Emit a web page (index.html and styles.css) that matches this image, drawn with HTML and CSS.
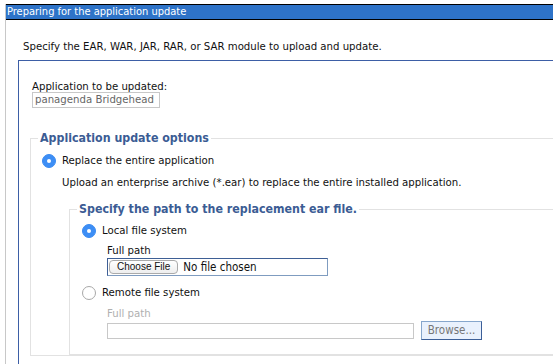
FILE: index.html
```html
<!DOCTYPE html>
<html lang="en">
<head>
    <meta charset="UTF-8">
    <title>Update application</title>
    <link rel="stylesheet" href="styles.css">
</head>
<body>
    <div class="panel">
        <div class="panel-title">Preparing for the application update</div>
        <p class="intro">Specify the EAR, WAR, JAR, RAR, or SAR module to upload and update.</p>
        <div class="content">
            <div class="field-label">Application to be updated:</div>
            <div class="readonly-box">panagenda Bridgehead</div>

            <fieldset class="group">
                <legend>Application update options</legend>
                <div class="radio-row">
                    <span class="radio checked"></span>
                    <span>Replace the entire application</span>
                </div>
                <div class="desc">Upload an enterprise archive (*.ear) to replace the entire installed application.</div>

                <fieldset class="group inner">
                    <legend>Specify the path to the replacement ear file.</legend>
                    <div class="radio-row">
                        <span class="radio checked"></span>
                        <span>Local file system</span>
                    </div>
                    <div class="path">
                        <div class="path-label">Full path</div>
                        <div class="file-box">
                            <span class="choose-btn">Choose File</span>
                            <span>No file chosen</span>
                        </div>
                    </div>

                    <div class="radio-row remote">
                        <span class="radio"></span>
                        <span>Remote file system</span>
                    </div>
                    <div class="path disabled">
                        <div class="path-label">Full path</div>
                        <div class="browse-row">
                            <div class="text-box"></div>
                            <span class="browse-btn">Browse...</span>
                        </div>
                    </div>
                </fieldset>
            </fieldset>
        </div>
    </div>
</body>
</html>
```

FILE: styles.css
```css
html, body {
    margin: 0;
    overflow: hidden;
    background-color: #ffffff;
}
body {
    font-family: "DejaVu Sans Condensed", "DejaVu Sans", sans-serif;
    font-stretch: condensed;
    font-size: 11.3px;
    color: #111111;
    height: 364px;
}
.panel {
    margin: 4px -20px 0 5px;
    border-left: 1px solid #c8c8c8;
    height: 360px;
    overflow: hidden;
}
.panel-title {
    height: 14px;
    line-height: 14px;
    padding-left: 1px;
    background-color: #2e73c8;
    border-top: 1px solid #000000;
    border-bottom: 1px solid #000000;
    color: #ffffff;
    font-size: 11px;
}
.intro {
    margin: 0;
    padding: 21px 0 0 17px;
    line-height: 12px;
    height: 19px;
}
.content {
    margin-left: 12px;
    border-top: 1px solid #3d5ea6;
    border-left: 1px solid #3d5ea6;
    padding: 20px 0 0 13px;
    height: 400px;
}
.field-label {
    line-height: 11px;
    height: 11px;
}
.readonly-box {
    width: 124px;
    height: 14px;
    line-height: 14px;
    padding-left: 2px;
    border: 1px solid #c8c8c8;
    color: #666666;
}
.group {
    margin: 22px 0 0 -2px;
    padding: 7px 0 0 11px;
    border: 1px solid #e2e2e2;
    border-right: none;
    min-width: 0;
}
.group legend {
    margin-left: -4px;
    padding: 0 2px;
    line-height: 16px;
    font-size: 12.3px;
    font-weight: bold;
    color: #3b5c94;
}
.radio-row {
    display: flex;
    align-items: center;
    gap: 6px;
    height: 16px;
    line-height: 16px;
}
.radio {
    width: 14px;
    height: 14px;
    box-sizing: border-box;
    border-radius: 50%;
    border: 1px solid #a8a8a8;
    background-color: #ffffff;
    display: flex;
    align-items: center;
    justify-content: center;
}
.radio.checked {
    border-color: #3a8bf2;
    background-color: #3d8ef5;
}
.radio.checked::after {
    content: "";
    width: 4px;
    height: 4px;
    border-radius: 50%;
    background-color: #ffffff;
}
.desc {
    margin: 6px 0 0 20px;
    line-height: 16px;
}
.inner {
    margin: 10px 0 0 27px;
    padding: 6px 0 14px 12px;
    border-bottom: 1px solid #e2e2e2;
}
.inner legend {
    margin-left: -5px;
}
.path {
    padding-left: 25px;
    margin-top: 5px;
}
.path-label {
    line-height: 14px;
}
.file-box {
    display: flex;
    align-items: center;
    gap: 5px;
    width: 219px;
    height: 16px;
    border: 1px solid #3e5f95;
    border-right-color: #7f9cc0;
    border-bottom-color: #7f9cc0;
    font-size: 11.5px;
}
.choose-btn {
    margin-left: 1px;
    height: 12px;
    line-height: 12px;
    padding: 0 7px;
    border: 1px solid #aaaaaa;
    border-radius: 4px;
    background: linear-gradient(#ffffff, #eeeeee);
    font-family: "Liberation Sans", sans-serif;
    font-size: 10px;
}
.remote {
    margin-top: 9px;
}
.disabled {
    margin-top: 6px;
    color: #b0b0b0;
}
.browse-row {
    display: flex;
    align-items: center;
    gap: 7px;
    height: 19px;
}
.text-box {
    width: 305px;
    height: 14px;
    border: 1px solid #c8c8c8;
}
.browse-btn {
    box-sizing: border-box;
    width: 61px;
    height: 19px;
    line-height: 17px;
    text-align: center;
    background-color: #e9f1fd;
    border: 1px solid #86a6cc;
    border-right-color: #3c5f98;
    border-bottom-color: #3c5f98;
    color: #777777;
    font-size: 11.5px;
}
```
